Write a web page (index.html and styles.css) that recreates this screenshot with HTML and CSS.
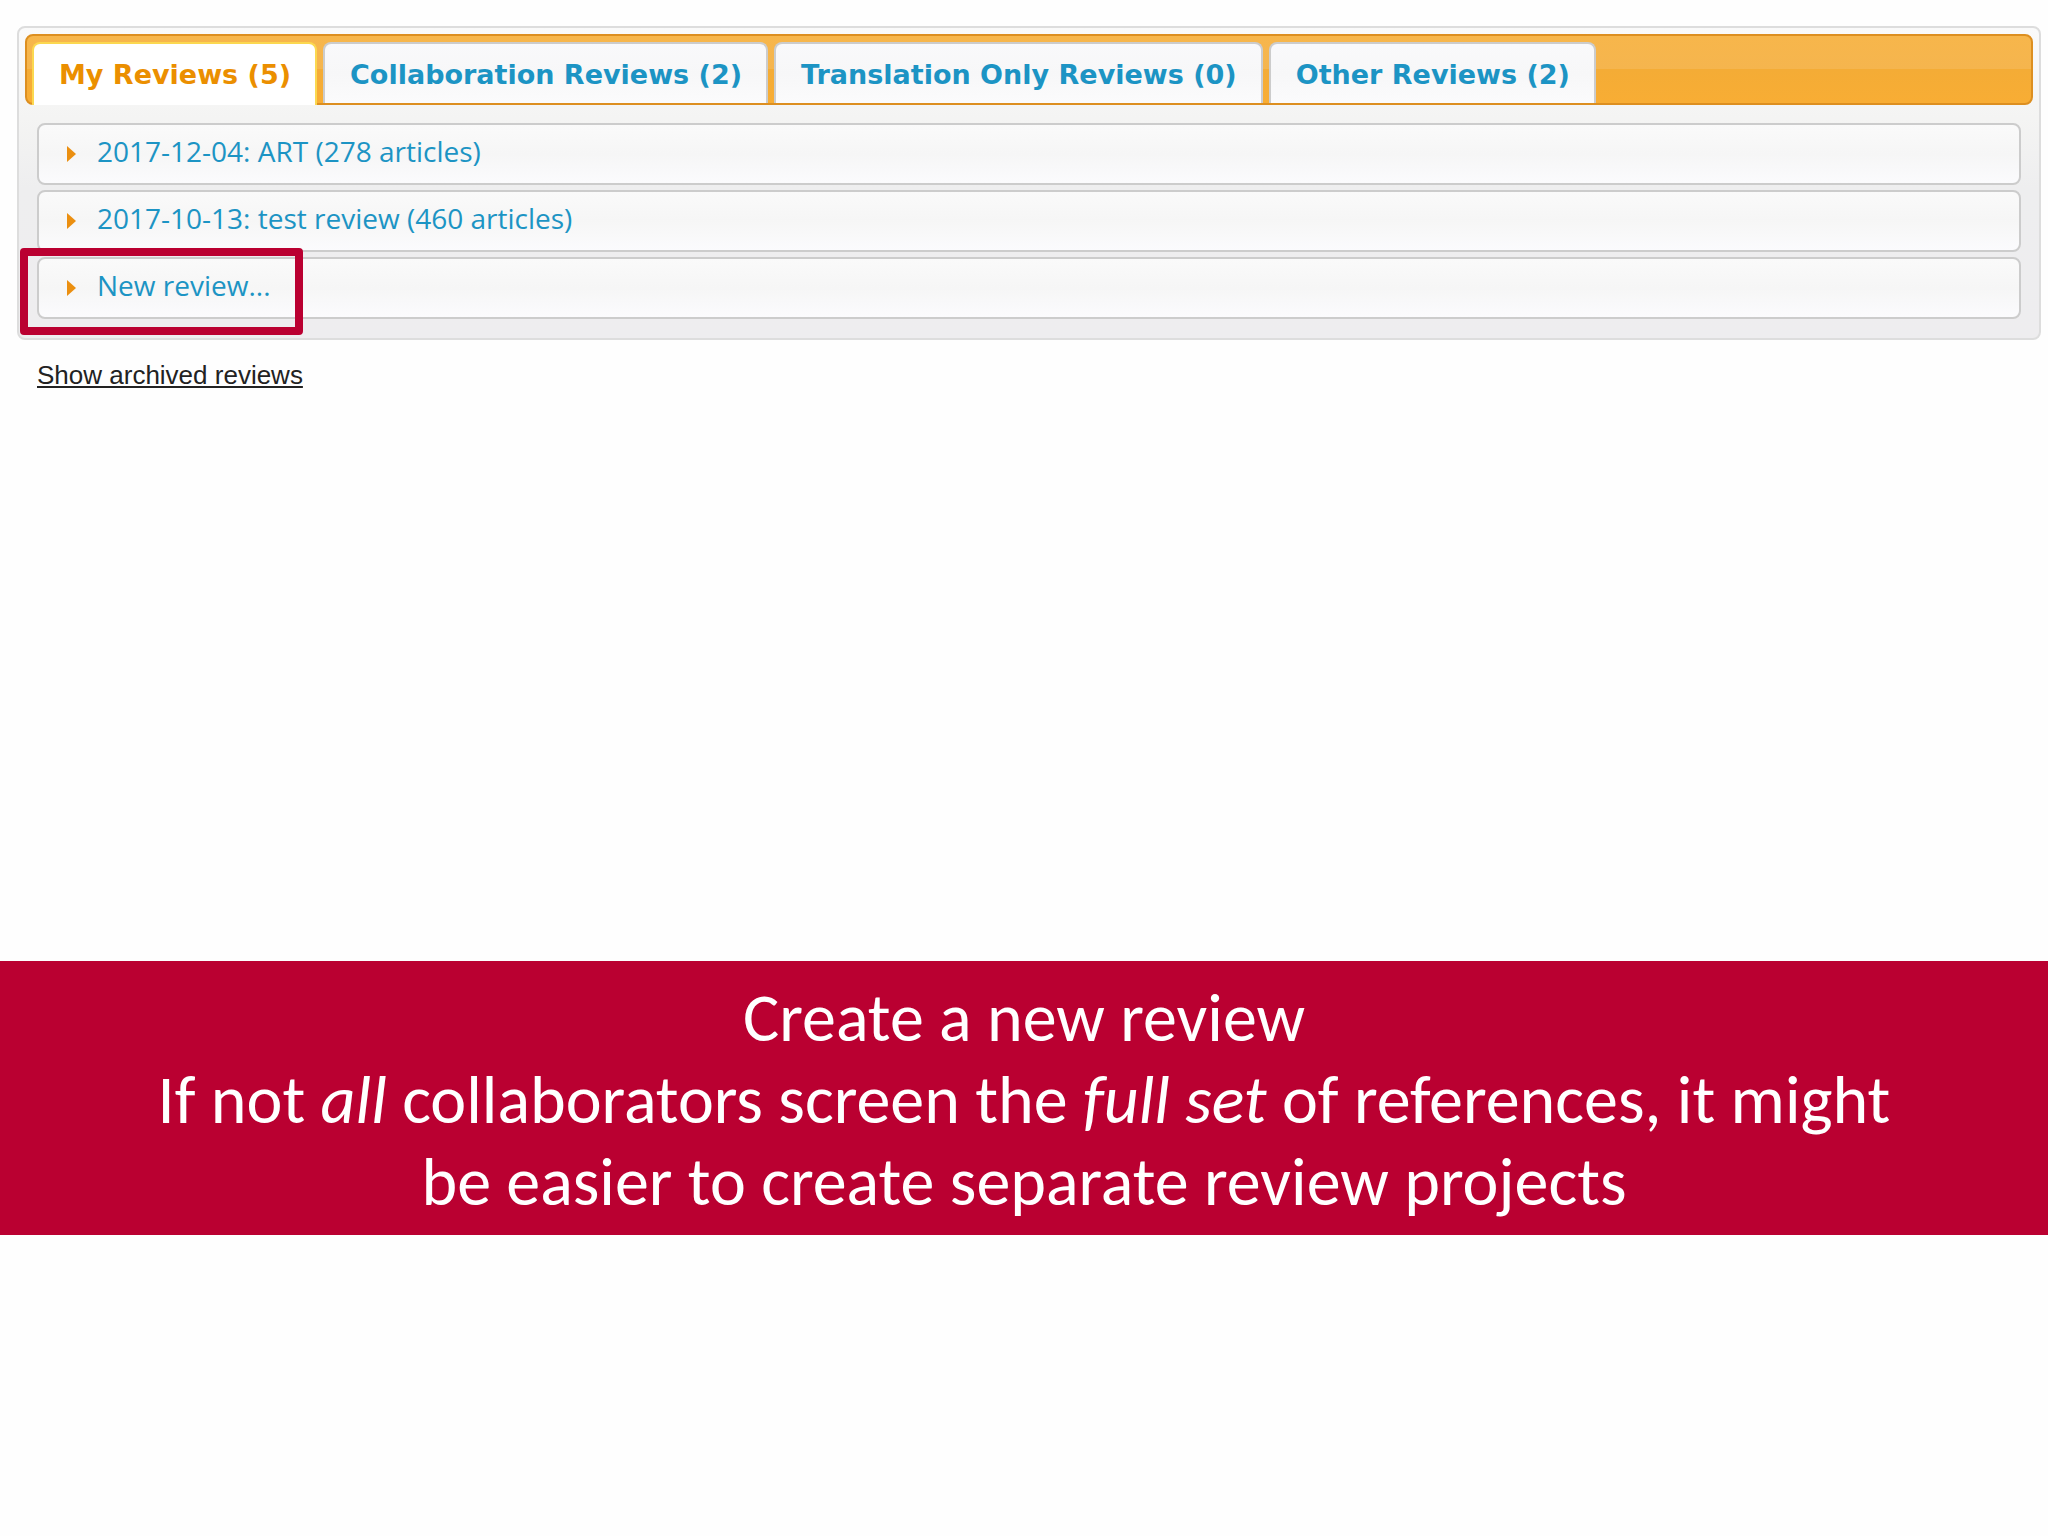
FILE: index.html
```html
<!DOCTYPE html>
<html lang="en">
<head>
<meta charset="utf-8">
<meta name="viewport" content="width=device-width, initial-scale=1">
<title>My Reviews</title>
<link rel="stylesheet" href="styles.css">
</head>
<body>
<main class="page">
  <section class="reviews">
    <div class="panel">
      <div class="tabs" role="tablist">
        <button class="tab tab-active" type="button" role="tab" aria-selected="true">My Reviews (5)</button>
        <button class="tab" type="button" role="tab" aria-selected="false">Collaboration Reviews (2)</button>
        <button class="tab" type="button" role="tab" aria-selected="false">Translation Only Reviews (0)</button>
        <button class="tab" type="button" role="tab" aria-selected="false">Other Reviews (2)</button>
      </div>
      <div class="accordion">
        <button class="item" type="button"><svg class="arrow" viewBox="0 0 9 16" aria-hidden="true"><path d="M0 0L9 8L0 16Z"/></svg>2017-12-04: ART (278 articles)</button>
        <button class="item" type="button"><svg class="arrow" viewBox="0 0 9 16" aria-hidden="true"><path d="M0 0L9 8L0 16Z"/></svg>2017-10-13: test review (460 articles)</button>
        <div class="marked">
          <button class="item" type="button"><svg class="arrow" viewBox="0 0 9 16" aria-hidden="true"><path d="M0 0L9 8L0 16Z"/></svg>New review...</button>
          <span class="highlight"></span>
        </div>
      </div>
    </div>
    <a class="archived" href="#archived">Show archived reviews</a>
  </section>
  <section class="banner">
    <p class="banner-text">Create a new review<br>If not <em>all</em> collaborators screen the <em>full set</em> of references, it might<br>be easier to create separate review projects</p>
  </section>
</main>
</body>
</html>
```
FILE: styles.css
```css
* {
  box-sizing: border-box;
}

body {
  margin: 0;
  background: #fefefe;
}

.page {
  display: grid;
  grid-template-rows: minmax(961px, auto) auto;
}

.reviews {
  padding: 26px 7px 0 17px;
}

.panel {
  padding: 6px;
  border: 2px solid #dddddd;
  border-radius: 8px;
  background: linear-gradient(#fafafa 0, #f4f4f3 90px, #eeeeef 160px, #eeedef 100%);
}

.tabs {
  display: flex;
  gap: 6px;
  height: 71px;
  padding: 6px 5px 0;
  border: 2px solid #dd8f20;
  border-radius: 8px;
  background: linear-gradient(#f7b64b 0, #f5b54e 50%, #f4ac36 50%, #f8ad34 100%);
}

.tab {
  height: 61px;
  padding: 2px 24px 0 25px;
  border: 2px solid #cccccc;
  border-bottom: 0;
  border-radius: 8px 8px 0 0;
  background: linear-gradient(#f9f9fb, #f7f7f8 50%, #fbfbfc);
  color: #1c94c4;
  font: bold 27px/32px "DejaVu Sans", Verdana, sans-serif;
  white-space: nowrap;
}

.tab-active {
  height: 63px;
  padding-top: 0;
  border-color: #fbd850;
  background: #ffffff;
  color: #eb8f00;
}

.accordion {
  display: grid;
  gap: 5px;
  padding: 18px 12px 13px;
}

.item {
  display: flex;
  align-items: center;
  gap: 21px;
  width: 100%;
  height: 62px;
  padding: 0 28px 6px;
  border: 2px solid #cccccc;
  border-radius: 8px;
  background: linear-gradient(#fafafa, #f6f6f6 50%, #fbfbfd);
  color: #1c94c4;
  font: 500 28px/32px "Open Sans", "Noto Sans", sans-serif;
  text-align: left;
}

.arrow {
  width: 9px;
  height: 16px;
  margin-top: 5px;
  fill: #eb8f10;
}

.marked {
  position: relative;
}

.highlight {
  position: absolute;
  top: -9px;
  left: -17px;
  width: 283px;
  height: 87px;
  border: 8px solid #ba0031;
  border-radius: 4px;
}

.archived {
  display: inline-block;
  margin: 19px 0 0 20px;
  color: #222222;
  font: 26px/32px "Liberation Sans", Arial, sans-serif;
}

.banner {
  padding: 16px 40px 12px;
  background: #ba0031;
  color: #ffffff;
  text-align: center;
}

.banner-text {
  margin: 0;
  font: 68px/82px Carlito, Calibri, Lato, sans-serif;
}
```
